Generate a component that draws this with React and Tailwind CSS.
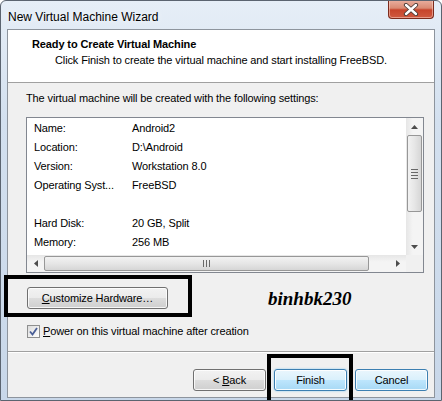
import React from "react";

const font = { fontFamily: '"Liberation Sans", Arial, sans-serif' };

function Btn({ children, primary, blue, className = "" }) {
  const base =
    "h-[22px] w-[73px] rounded-[3px] border flex items-center justify-center text-[11px] text-black shadow-[inset_0_0_0_1px_rgba(255,255,255,0.8)]";
  const look = primary
    ? "border-[#3c7fb1] bg-[linear-gradient(#eaf6fd_0%,#d9f0fc_50%,#bee6fd_50%,#a7d9f5_100%)] shadow-[inset_0_0_0_1px_rgba(255,255,255,0.9),0_0_2px_#7ec4f0]"
    : blue
    ? "border-[#3c7fb1] bg-[linear-gradient(#eaf6fd_0%,#d9f0fc_50%,#bee6fd_50%,#a7d9f5_100%)]"
    : "border-[#707070] bg-[linear-gradient(#f2f2f2_0%,#ebebeb_50%,#dddddd_50%,#cfcfcf_100%)]";
  return <div className={`${base} ${look} ${className}`}>{children}</div>;
}

function Row({ label, value }) {
  return (
    <div className="h-[19px] flex items-center text-[11px] text-black">
      <div className="w-[98px]">{label}</div>
      <div>{value}</div>
    </div>
  );
}

function Arrow({ dir }) {
  const pts = {
    up: "0,4 3.5,0 7,4",
    down: "0,0 3.5,4 7,0",
    left: "4,0 0,3.5 4,7",
    right: "0,0 4,3.5 0,7",
  }[dir];
  const w = dir === "up" || dir === "down" ? 7 : 4;
  const h = dir === "up" || dir === "down" ? 4 : 7;
  return (
    <svg width={w} height={h} viewBox={`0 0 ${w} ${h}`}>
      <polygon points={pts} fill="#4d4d4d" />
    </svg>
  );
}

export default function App() {
  return (
    <div
      className="relative w-[442px] h-[401px] overflow-hidden rounded-t-[6px] border border-[#5b6470] bg-[linear-gradient(180deg,#e6eef7_0%,#d3e0ef_30%,#c8d7e9_100%)] flex flex-col"
      style={font}
    >
      {/* title bar */}
      <div className="h-[28px] flex items-start justify-between pl-[7px] pr-[7px]">
        <div className="pt-[7px] text-[12px] text-black [text-shadow:0_0_6px_#ffffff]">
          New Virtual Machine Wizard
        </div>
        <div className="w-[46px] h-[19px] -mt-px rounded-b-[4px] border border-[#7c2b1c] border-t-0 bg-[linear-gradient(180deg,#eab0a0_0%,#d98a73_45%,#c7442b_55%,#d05a40_100%)] flex items-center justify-center shadow-[inset_0_0_0_1px_rgba(255,220,210,0.5)]">
          <svg width="16" height="13" viewBox="0 0 16 13">
            <path d="M3 2 L13 11 M13 2 L3 11" stroke="#4a3a36" strokeWidth="4.2" strokeLinecap="round" />
            <path d="M3 2 L13 11 M13 2 L3 11" stroke="#ffffff" strokeWidth="2.4" strokeLinecap="round" />
          </svg>
        </div>
      </div>

      {/* client */}
      <div className="mx-[6px] border border-[#8d949d] bg-[#f0f0f0] flex flex-col tracking-[-0.12px]">
        {/* header */}
        <div className="h-[53px] bg-white border-b border-[#a0a0a0] pt-[6px]">
          <div className="pl-[24px] h-[16px] leading-[16px] text-[11px] font-bold text-black">
            Ready to Create Virtual Machine
          </div>
          <div className="pl-[47px] h-[16px] leading-[16px] text-[11px] text-black">
            Click Finish to create the virtual machine and start installing FreeBSD.
          </div>
        </div>

        {/* body */}
        <div className="flex flex-col">
          <div className="mt-[7px] pl-[18px] h-[16px] leading-[16px] text-[11px] text-black">
            The virtual machine will be created with the following settings:
          </div>

          <div className="mt-[11px] ml-[18px] w-[398px] h-[156px] border border-[#828790] bg-white flex flex-col">
            <div className="flex h-[137px]">
              <div className="flex-1 pl-[7px] pt-[1px] overflow-hidden">
                <Row label="Name:" value="Android2" />
                <Row label="Location:" value="D:\Android" />
                <Row label="Version:" value="Workstation 8.0" />
                <Row label="Operating Syst..." value="FreeBSD" />
                <div className="h-[19px]" />
                <Row label="Hard Disk:" value="20 GB, Split" />
                <Row label="Memory:" value="256 MB" />
              </div>
              {/* vertical scrollbar */}
              <div className="w-[17px] h-full bg-[linear-gradient(90deg,#e6e6e6,#f4f4f4_40%,#f4f4f4)] flex flex-col items-center">
                <div className="h-[17px] flex items-center justify-center">
                  <Arrow dir="up" />
                </div>
                <div className="w-[15px] h-[77px] rounded-[2px] border border-[#979797] bg-[linear-gradient(90deg,#f2f2f2,#e6e6e6_50%,#d6d6d6)] flex flex-col items-center justify-center gap-[2px]">
                  <div className="w-[7px] h-px bg-[#686868]" />
                  <div className="w-[7px] h-px bg-[#686868]" />
                  <div className="w-[7px] h-px bg-[#686868]" />
                  <div className="w-[7px] h-px bg-[#686868]" />
                </div>
                <div className="flex-1" />
                <div className="h-[17px] flex items-center justify-center">
                  <Arrow dir="down" />
                </div>
              </div>
            </div>
            {/* horizontal scrollbar */}
            <div className="flex h-[17px]">
              <div className="flex-1 flex items-center bg-[linear-gradient(180deg,#e6e6e6,#f4f4f4_40%,#f4f4f4)]">
                <div className="w-[17px] flex items-center justify-center">
                  <Arrow dir="left" />
                </div>
                <div className="w-[325px] h-[15px] rounded-[2px] border border-[#979797] bg-[linear-gradient(180deg,#f2f2f2,#e6e6e6_50%,#d6d6d6)] flex items-center justify-center gap-[2px]">
                  <div className="w-px h-[7px] bg-[#686868]" />
                  <div className="w-px h-[7px] bg-[#686868]" />
                  <div className="w-px h-[7px] bg-[#686868]" />
                </div>
                <div className="flex-1" />
                <div className="w-[17px] flex items-center justify-center">
                  <Arrow dir="right" />
                </div>
              </div>
              <div className="w-[17px] bg-[#f0f0f0]" />
            </div>
          </div>

          {/* customize row */}
          <div className="mt-[14px] ml-[19px] flex items-center">
            <Btn className="w-[141px]">
              <span>
                <span className="underline">C</span>ustomize Hardware…
              </span>
            </Btn>
            <div
              className="ml-[100px] text-[19px] font-bold italic text-black leading-none tracking-normal"
              style={{ fontFamily: '"Liberation Serif", "Times New Roman", serif' }}
            >
              binhbk230
            </div>
          </div>

          {/* checkbox */}
          <div className="mt-[16px] ml-[19px] flex items-center gap-[3px] h-[13px]">
            <div className="w-[13px] h-[13px] border border-[#8e8f8f] bg-[linear-gradient(135deg,#dcdcdc,#ffffff)] p-[1px] flex items-center justify-center">
              <svg width="9" height="9" viewBox="0 0 9 9">
                <path d="M1 4.5 L3.5 7.5 L8 1" stroke="#4a5f97" strokeWidth="1.8" fill="none" />
              </svg>
            </div>
            <div className="text-[11px] text-black">
              <span className="underline">P</span>ower on this virtual machine after creation
            </div>
          </div>

          {/* separator */}
          <div className="mt-[13px] h-px bg-[#a0a0a0] border-b border-white box-content" />

          {/* buttons */}
          <div className="mt-[16px] mb-[6px] flex justify-end gap-[8px] pr-[6px]">
            <Btn>
              <span>
                &lt; <span className="underline">B</span>ack
              </span>
            </Btn>
            <Btn primary>Finish</Btn>
            <Btn blue>Cancel</Btn>
          </div>
        </div>
      </div>

      <div className="flex-1" />

      {/* annotation boxes */}
      <div className="absolute left-[3px] top-[274px] w-[188px] h-[42px] border-[4px] border-black" />
      <div className="absolute left-[266px] top-[353px] w-[86px] h-[52px] border-[4px] border-black" />
    </div>
  );
}
